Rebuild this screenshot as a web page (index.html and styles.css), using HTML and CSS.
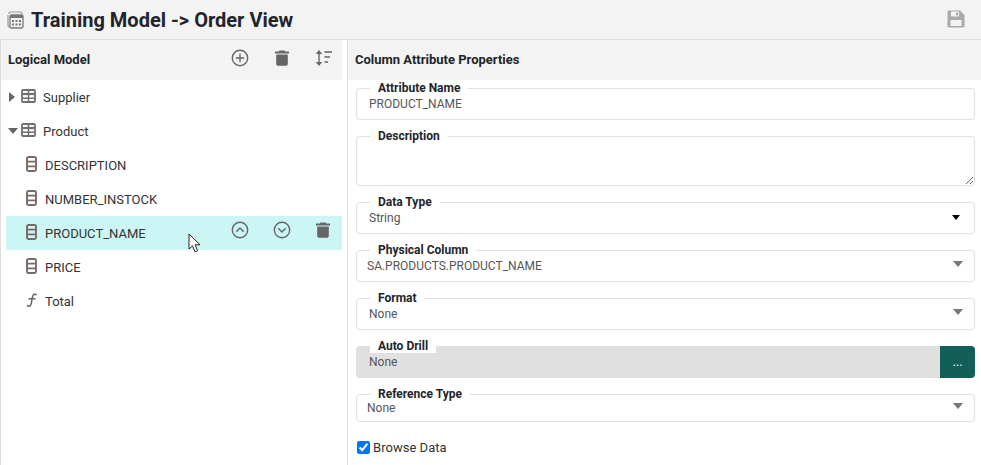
FILE: index.html
```html
<!DOCTYPE html>
<html lang="en">
<head>
  <meta charset="UTF-8">
  <title>Training Model - Order View</title>
  <link rel="stylesheet" href="styles.css">
</head>
<body>
  <header class="top-bar">
    <div class="title">
      <svg class="title-icon" width="17" height="18" viewBox="0 0 17 18"><path d="M2 3V2.500A1.500 1.500 0 0 1 3.500 1h10A1.500 1.500 0 0 1 15 2.500V3M1 4V14.500A1.500 1.500 0 0 0 2.500 16H3" fill="none" stroke="#999" stroke-width="1.200"/><rect x="3" y="4" width="13" height="13" rx="1.500" fill="none" stroke="#777" stroke-width="1.300"/><rect x="3" y="4" width="13" height="3" fill="#777"/><path d="M5 9h2v2H5zM8.500 9h2v2h-2zM12 9h2v2h-2zM5 12.500h2v2H5zM8.500 12.500h2v2h-2zM12 12.500h2v2h-2z" fill="#777"/></svg>
      <h1>Training Model -&gt; Order View</h1>
    </div>
    <svg class="save-icon" width="18" height="18" viewBox="0 0 18 18"><path d="M2 0.500h11l4.500 4.500v11a1.500 1.500 0 0 1-1.500 1.500H2A1.500 1.500 0 0 1 0.500 16V2A1.500 1.500 0 0 1 2 0.500zM4 1.500V6.500h8V1.500zM9 2.500h2V5.500H9zM3.500 10V16h11V10z" fill="#aaa" fill-rule="evenodd"/></svg>
  </header>

  <div class="columns">
    <aside class="model-panel">
      <div class="panel-head">
        <span class="panel-title">Logical Model</span>
        <div class="actions">
          <svg class="action" width="18" height="18" viewBox="0 0 18 18"><circle cx="9" cy="9" r="7.700" fill="none" stroke="#666" stroke-width="1.400"/><path d="M9 4.800v8.400M4.800 9h8.400" stroke="#666" stroke-width="1.400"/></svg>
          <svg class="action" width="18" height="18" viewBox="0 0 18 18"><path d="M6.500 1.500h5l.8 1H16v2H2v-2h3.700zM3.200 5.500h11.600V15a1.800 1.800 0 0 1-1.800 1.800H5A1.800 1.800 0 0 1 3.200 15z" fill="#666"/></svg>
          <svg class="action" width="18" height="18" viewBox="0 0 18 18"><path d="M5 3v12" stroke="#666" stroke-width="1.400"/><path d="M1.800 5 5 1l3.200 4zM1.800 13 5 17l3.200-4z" fill="#666"/><path d="M10.500 3H18M10.500 8H16M10.500 13H14" stroke="#666" stroke-width="1.600"/></svg>
        </div>
      </div>

      <ul class="tree">
        <li class="tree-row table-row">
          <span class="caret caret-right"></span>
          <svg class="table-icon" width="15" height="14" viewBox="0 0 15 14"><rect x="1" y="1" width="13" height="12" rx="1" fill="none" stroke="#707070" stroke-width="1.800"/><path d="M1 5h13" stroke="#707070" stroke-width="2.200"/><path d="M1 9.300h13M7.500 1v12" stroke="#707070" stroke-width="1.500"/></svg>
          <span>Supplier</span>
        </li>
        <li class="tree-row table-row">
          <span class="caret caret-down"></span>
          <svg class="table-icon" width="15" height="14" viewBox="0 0 15 14"><rect x="1" y="1" width="13" height="12" rx="1" fill="none" stroke="#707070" stroke-width="1.800"/><path d="M1 5h13" stroke="#707070" stroke-width="2.200"/><path d="M1 9.300h13M7.500 1v12" stroke="#707070" stroke-width="1.500"/></svg>
          <span>Product</span>
        </li>
        <li class="tree-row column-row">
          <svg class="column-icon" width="11" height="16" viewBox="0 0 11 16"><rect x="1" y="1" width="9" height="14" rx="1.500" fill="none" stroke="#7a6a66" stroke-width="1.900"/><path d="M1 5.700h9M1 10.300h9" stroke="#7a6a66" stroke-width="1.700"/></svg>
          <span>DESCRIPTION</span>
        </li>
        <li class="tree-row column-row">
          <svg class="column-icon" width="11" height="16" viewBox="0 0 11 16"><rect x="1" y="1" width="9" height="14" rx="1.500" fill="none" stroke="#7a6a66" stroke-width="1.900"/><path d="M1 5.700h9M1 10.300h9" stroke="#7a6a66" stroke-width="1.700"/></svg>
          <span>NUMBER_INSTOCK</span>
        </li>
        <li class="tree-row column-row selected">
          <svg class="column-icon" width="11" height="16" viewBox="0 0 11 16"><rect x="1" y="1" width="9" height="14" rx="1.500" fill="none" stroke="#7a6a66" stroke-width="1.900"/><path d="M1 5.700h9M1 10.300h9" stroke="#7a6a66" stroke-width="1.700"/></svg>
          <span>PRODUCT_NAME</span>
          <div class="actions row-actions">
            <svg class="action" width="18" height="18" viewBox="0 0 18 18"><circle cx="9" cy="9" r="7.700" fill="none" stroke="#666" stroke-width="1.400"/><path d="M5.300 10.700 9 7l3.700 3.700" fill="none" stroke="#666" stroke-width="1.500"/></svg>
            <svg class="action" width="18" height="18" viewBox="0 0 18 18"><circle cx="9" cy="9" r="7.700" fill="none" stroke="#666" stroke-width="1.400"/><path d="M5.300 7.300 9 11l3.700-3.700" fill="none" stroke="#666" stroke-width="1.500"/></svg>
            <svg class="action" width="18" height="18" viewBox="0 0 18 18"><path d="M6.500 1.500h5l.8 1H16v2H2v-2h3.700zM3.200 5.500h11.600V15a1.800 1.800 0 0 1-1.800 1.800H5A1.800 1.800 0 0 1 3.200 15z" fill="#666"/></svg>
          </div>
          <svg class="cursor" width="14" height="20" viewBox="0 0 14 20"><path d="M1 1v15l3.500-3.200 2.500 6 2.600-1.100-2.500-5.900H12z" fill="#fff" stroke="#222" stroke-width="1"/></svg>
        </li>
        <li class="tree-row column-row">
          <svg class="column-icon" width="11" height="16" viewBox="0 0 11 16"><rect x="1" y="1" width="9" height="14" rx="1.500" fill="none" stroke="#7a6a66" stroke-width="1.900"/><path d="M1 5.700h9M1 10.300h9" stroke="#7a6a66" stroke-width="1.700"/></svg>
          <span>PRICE</span>
        </li>
        <li class="tree-row column-row">
          <svg class="column-icon" width="11" height="14" viewBox="0 0 11 14"><path d="M10.500 2.200C9.800 1 8 .8 7.200 2 6.500 3 6.200 5 5.800 7.500 5.400 10 5.200 12.500 3.800 13 3 13.300 1.800 13 1 12.200M2.500 5.800h7" fill="none" stroke="#666" stroke-width="1.500"/></svg>
          <span>Total</span>
        </li>
      </ul>
    </aside>

    <section class="props-panel">
      <div class="props-head">Column Attribute Properties</div>
      <form class="props-form">
        <fieldset class="field">
          <legend>Attribute Name</legend>
          <div class="value">PRODUCT_NAME</div>
        </fieldset>
        <fieldset class="field">
          <legend>Description</legend>
          <textarea class="area"></textarea>
        </fieldset>
        <fieldset class="field">
          <legend>Data Type</legend>
          <div class="value select-value">String<span class="arrow arrow-dark"></span></div>
        </fieldset>
        <fieldset class="field">
          <legend>Physical Column</legend>
          <div class="value select-value tight">SA.PRODUCTS.PRODUCT_NAME<span class="arrow"></span></div>
        </fieldset>
        <fieldset class="field">
          <legend>Format</legend>
          <div class="value select-value">None<span class="arrow"></span></div>
        </fieldset>
        <div class="drill-group">
          <fieldset class="field disabled">
            <legend>Auto Drill</legend>
            <div class="value">None</div>
          </fieldset>
          <button type="button" class="more-btn">...</button>
        </div>
        <fieldset class="field short">
          <legend>Reference Type</legend>
          <div class="value select-value tight">None<span class="arrow"></span></div>
        </fieldset>
        <label class="check">
          <input type="checkbox" checked>
          <span>Browse Data</span>
        </label>
      </form>
    </section>
  </div>
</body>
</html>
```

FILE: styles.css
```css
* {
  box-sizing: border-box;
}
html, body {
  height: 100%;
}
body {
  margin: 0;
  background: #fff;
  color: #333;
  font-family: Roboto, sans-serif;
  font-size: 13px;
  overflow: hidden;
}
.top-bar {
  height: 40px;
  background: #f3f3f3;
  border-bottom: 1px solid #ddd;
  display: flex;
  justify-content: space-between;
  align-items: center;
  padding: 0 16px 0 7px;
}
.title {
  display: flex;
  align-items: center;
  gap: 7px;
}
.title h1 {
  margin: 0;
  font-size: 20px;
  font-weight: 700;
  color: #212529;
}
.title-icon {
  margin-top: 1px;
}
.save-icon {
  margin-top: -2px;
}
.columns {
  display: flex;
  height: 425px;
}
.model-panel {
  width: 348px;
  border-left: 1px solid #ddd;
  border-right: 1px solid #ddd;
  flex: none;
}
.panel-head {
  width: 341px;
  height: 40px;
  background: #f3f3f3;
  display: flex;
  justify-content: space-between;
  align-items: center;
  padding: 0 10px 2px 7px;
}
.panel-title, .props-head {
  font-size: 13px;
  font-weight: 700;
  color: #212529;
}
.actions {
  display: flex;
  align-items: center;
  margin-top: -2px;
}
.action {
  margin-left: 24px;
}
.action:last-child {
  margin-left: 23px;
}
.tree {
  list-style: none;
  margin: 0;
  padding: 0;
}
.tree-row {
  position: relative;
  width: 336px;
  height: 34px;
  margin-left: 5px;
  display: flex;
  align-items: center;
}
.table-row {
  padding-left: 2px;
}
.column-row {
  padding-left: 20px;
}
.selected {
  background: #ccf6f6;
}
.row-actions {
  margin-left: auto;
  padding-right: 10px;
  margin-top: -7px;
}
.caret {
  width: 0;
  height: 0;
  flex: none;
}
.caret-right {
  margin: 0 6px 0 1px;
  border-top: 5px solid transparent;
  border-bottom: 5px solid transparent;
  border-left: 6px solid #666;
}
.caret-down {
  margin: 0 3px 0 0;
  border-left: 5px solid transparent;
  border-right: 5px solid transparent;
  border-top: 6px solid #666;
}
.table-icon {
  margin-right: 7px;
  margin-top: -3px;
  flex: none;
}
.column-icon {
  margin-right: 8px;
  margin-top: -3px;
  flex: none;
}
.cursor {
  position: absolute;
  left: 182px;
  top: 17px;
}
.props-panel {
  flex: 1;
}
.props-head {
  height: 40px;
  background: #f3f3f3;
  display: flex;
  align-items: center;
  padding: 0 0 2px 7px;
}
.props-form {
  padding: 1px 6px 0 8px;
}
.field {
  margin: 0 0 9px;
  padding: 1px 12px 7px;
  border: 1px solid #e0e0e0;
  border-radius: 4px;
  min-width: 0;
}
.field legend {
  margin-left: 1px;
  padding: 0 8px;
  font-size: 12px;
  line-height: 14px;
  font-weight: 700;
  color: #212529;
  background: #fff;
}
.value {
  font-size: 12px;
  line-height: 16px;
  color: #555;
}
.select-value {
  position: relative;
  height: 16px;
}
.tight {
  margin-left: -2px;
}
.arrow {
  position: absolute;
  right: -1px;
  top: 3px;
  border-left: 5px solid transparent;
  border-right: 5px solid transparent;
  border-top: 6px solid #777;
}
.arrow-dark {
  right: 2px;
  top: 5px;
  border-left-width: 4px;
  border-right-width: 4px;
  border-top: 5px solid #000;
}
.area {
  display: block;
  width: calc(100% + 24px);
  height: 43px;
  margin: -2px -12px -7px;
  padding: 0 12px;
  border: 0;
  outline: 0;
  background: transparent;
  resize: vertical;
}
.drill-group {
  display: flex;
}
.drill-group .field {
  flex: 1;
}
.disabled {
  background: #e0e0e0;
  border-radius: 4px 0 0 4px;
}
.more-btn {
  width: 35px;
  height: 32px;
  margin-top: 7px;
  padding: 0;
  border: 0;
  border-radius: 0 4px 4px 0;
  background: #125f5a;
  color: #fff;
  font-size: 12px;
}
.short {
  padding: 0 12px 5px;
}
.short .value {
  margin-top: -1px;
}
.check {
  display: flex;
  align-items: center;
  margin-top: 18px;
  letter-spacing: .03px;
}
.check input {
  width: 13px;
  height: 13px;
  margin: 0 3px 0 1px;
}
```
